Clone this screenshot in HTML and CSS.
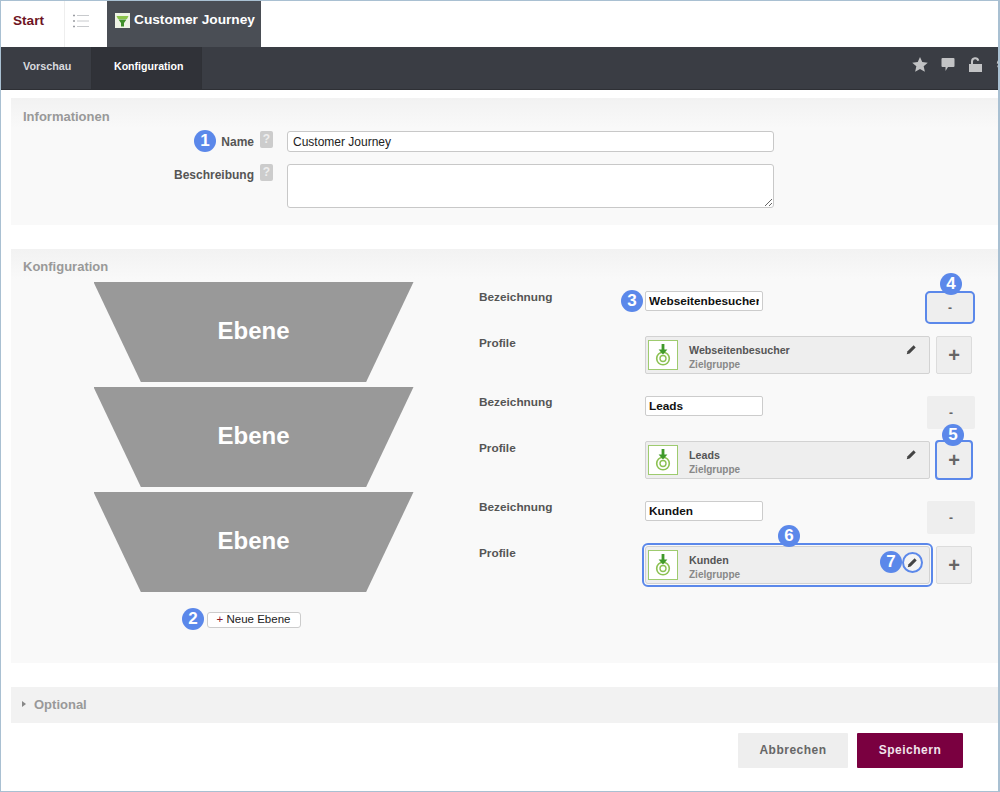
FILE: index.html
```html
<!DOCTYPE html>
<html lang="en">
<head>
    <meta charset="UTF-8">
    <title>Customer Journey</title>
    <link rel="stylesheet" href="styles.css">
</head>
<body>
    <div class="tabs">
        <div class="tab-start">Start</div>
        <div class="tab-list">
            <svg width="16" height="14" viewBox="0 0 16 14">
                <path d="M0 1.500h2M0 7h2M0 12.500h2" stroke="#9a9da2" stroke-width="1.500"/>
                <path d="M4 1.500h12M4 7h12M4 12.500h12" stroke="#c8cacd" stroke-width="1"/>
            </svg>
        </div>
        <div class="tab-active">
            <span class="tab-icon">
                <svg width="13" height="12" viewBox="0 0 13 12"><path d="M.5 1h12l-1.500 3H2z" fill="#8bc34a"/><path d="M2.500 4.500h8L8 8v3.500H5V8z" fill="#3f8f2a"/></svg>
            </span>
            Customer Journey
        </div>
    </div>

    <div class="nav">
        <div class="nav-item">Vorschau</div>
        <div class="nav-item nav-current">Konfiguration</div>
        <div class="nav-icons">
            <svg width="16" height="15" viewBox="0 0 17 16"><path d="M8.500 0l2.400 5.400 5.900.6-4.400 3.900 1.300 5.800-5.200-3-5.200 3 1.300-5.800L.2 6l5.900-.6z" fill="#c2c3c5"/></svg>
            <svg width="14" height="15" viewBox="0 0 14 15"><path d="M1.500 1h11a1 1 0 0 1 1 1v7a1 1 0 0 1-1 1H7l-2.500 4v-4h-3a1 1 0 0 1-1-1V2a1 1 0 0 1 1-1z" fill="#c2c3c5"/></svg>
            <svg width="15" height="15" viewBox="0 0 15 15"><path d="M1 7h13v8H1z" fill="#c2c3c5"/><path d="M4 7V4.500a3.200 3.200 0 0 1 6.300-.8" fill="none" stroke="#c2c3c5" stroke-width="2"/></svg>
            <svg width="14" height="14" viewBox="0 0 14 14"><circle cx="7" cy="7" r="4.500" fill="none" stroke="#c2c3c5" stroke-width="3.500" stroke-dasharray="3 1.700"/></svg>
        </div>
    </div>

    <div class="content">
        <section class="panel panel-info">
            <h2>Informationen</h2>
            <div class="info-row">
                <label class="info-label">Name</label>
                <span class="help">?</span>
                <input class="info-input" type="text" value="Customer Journey">
            </div>
            <div class="info-row info-row-area">
                <label class="info-label">Beschreibung</label>
                <span class="help">?</span>
                <textarea class="info-area"></textarea>
            </div>
        </section>

        <section class="panel panel-config">
            <h2>Konfiguration</h2>
            <div class="config-body">
                <div class="funnel">
                    <div class="funnel-step">Ebene</div>
                    <div class="funnel-step">Ebene</div>
                    <div class="funnel-step">Ebene</div>
                    <button class="add-level"><span class="add-plus">+</span> Neue Ebene</button>
                </div>
                <div class="levels">
                    <div class="level">
                        <div class="level-label">Bezeichnung</div>
                        <input class="level-input" type="text" value="Webseitenbesucher">
                        <button class="btn-minus marked">-</button>
                        <div class="level-label label-profile">Profile</div>
                        <div class="profile">
                            <span class="profile-icon"><svg width="16" height="22" viewBox="0 0 16 22"><circle cx="8" cy="14.500" r="6.300" fill="none" stroke="#8cc152" stroke-width="1.600"/><circle cx="8" cy="14.500" r="3" fill="none" stroke="#8cc152" stroke-width="1.400"/><path d="M6.600 0h2.800v5.500h3L8 10.500l-4.400-5h3z" fill="#3f9a2a"/></svg></span>
                            <div class="profile-text"><b>Webseitenbesucher</b><span>Zielgruppe</span></div>
                            <svg class="pencil" width="11" height="11" viewBox="0 0 12 12"><path d="M.8 11.200l.9-3.200 6.600-6.600 2.300 2.300-6.600 6.600z" fill="#444"/></svg>
                        </div>
                        <button class="btn-plus">+</button>
                    </div>
                    <div class="level">
                        <div class="level-label">Bezeichnung</div>
                        <input class="level-input" type="text" value="Leads">
                        <button class="btn-minus">-</button>
                        <div class="level-label label-profile">Profile</div>
                        <div class="profile">
                            <span class="profile-icon"><svg width="16" height="22" viewBox="0 0 16 22"><circle cx="8" cy="14.500" r="6.300" fill="none" stroke="#8cc152" stroke-width="1.600"/><circle cx="8" cy="14.500" r="3" fill="none" stroke="#8cc152" stroke-width="1.400"/><path d="M6.600 0h2.800v5.500h3L8 10.500l-4.400-5h3z" fill="#3f9a2a"/></svg></span>
                            <div class="profile-text"><b>Leads</b><span>Zielgruppe</span></div>
                            <svg class="pencil" width="11" height="11" viewBox="0 0 12 12"><path d="M.8 11.200l.9-3.200 6.600-6.600 2.300 2.300-6.600 6.600z" fill="#444"/></svg>
                        </div>
                        <button class="btn-plus marked">+</button>
                    </div>
                    <div class="level">
                        <div class="level-label">Bezeichnung</div>
                        <input class="level-input" type="text" value="Kunden">
                        <button class="btn-minus">-</button>
                        <div class="level-label label-profile">Profile</div>
                        <div class="profile marked">
                            <span class="profile-icon"><svg width="16" height="22" viewBox="0 0 16 22"><circle cx="8" cy="14.500" r="6.300" fill="none" stroke="#8cc152" stroke-width="1.600"/><circle cx="8" cy="14.500" r="3" fill="none" stroke="#8cc152" stroke-width="1.400"/><path d="M6.600 0h2.800v5.500h3L8 10.500l-4.400-5h3z" fill="#3f9a2a"/></svg></span>
                            <div class="profile-text"><b>Kunden</b><span>Zielgruppe</span></div>
                            <span class="pencil-ring"><svg width="11" height="11" viewBox="0 0 12 12"><path d="M.8 11.200l.9-3.200 6.600-6.600 2.300 2.300-6.600 6.600z" fill="#444"/></svg></span>
                        </div>
                        <button class="btn-plus">+</button>
                    </div>
                </div>
            </div>
        </section>

        <section class="panel panel-optional">
            <span class="caret"></span>Optional
        </section>

        <div class="actions">
            <button class="btn-cancel">Abbrechen</button>
            <button class="btn-save">Speichern</button>
        </div>
    </div>

    <span class="badge badge-1">1</span>
    <span class="badge badge-2">2</span>
    <span class="badge badge-3">3</span>
    <span class="badge badge-4">4</span>
    <span class="badge badge-5">5</span>
    <span class="badge badge-6">6</span>
    <span class="badge badge-7">7</span>
</body>
</html>
```

FILE: styles.css
```css
* {
    box-sizing: border-box;
}
html, body {
    height: 100%;
}
body {
    position: relative;
    margin: 0;
    height: 792px;
    overflow: hidden;
    border: 1px solid #a9c0d2;
    border-right-width: 2px;
    background-color: #fff;
    font-family: "Liberation Sans", Arial, sans-serif;
    color: #4a4a4a;
}

.tabs {
    display: flex;
    height: 46px;
    background-color: #fff;
}
.tab-start {
    width: 64px;
    padding: 12px 0 0 12px;
    border-right: 1px solid #eee;
    color: #6e1423;
    font-size: 13.600px;
    font-weight: bold;
}
.tab-list {
    width: 42px;
    padding: 13px 0 0 8px;
}
.tab-active {
    display: flex;
    align-items: flex-start;
    width: 154px;
    padding: 11px 0 0 8px;
    background-color: #4a4e55;
    color: #fff;
    font-size: 13.700px;
    font-weight: bold;
}
.tab-icon {
    display: flex;
    align-items: center;
    justify-content: center;
    width: 15px;
    height: 15px;
    margin: 1px 4px 0 0;
    background-color: #eef3e4;
}

.nav {
    display: flex;
    height: 43px;
    background-color: #3a3d44;
    border-bottom: 1px solid #2e3035;
}
.nav-item {
    width: 91px;
    padding-top: 13px;
    padding-left: 22px;
    border-right: 1px solid #2f3136;
    color: #d8dade;
    font-size: 10.800px;
    font-weight: bold;
}
.nav-current {
    width: 110px;
    background-color: #303238;
    color: #fff;
    font-size: 10.600px;
}
.nav-icons {
    display: flex;
    align-items: flex-start;
    gap: 13px;
    margin-left: auto;
    margin-right: -12px;
    padding-top: 10px;
}

.content {
    padding: 8px 0 0 10px;
}
.panel {
    background: linear-gradient(#f2f2f2, #f9f9f9 30px);
}
.panel h2 {
    margin: 0;
    color: #999;
    font-size: 13px;
    font-weight: bold;
}

.panel-info {
    height: 127px;
    padding: 11px 12px 0;
}
.info-row {
    display: flex;
    align-items: flex-start;
    margin-top: 7px;
}
.info-row-area {
    margin-top: 12px;
}
.info-label {
    width: 231px;
    padding-top: 4px;
    text-align: right;
    color: #555;
    font-size: 12px;
    font-weight: bold;
}
.help {
    width: 13px;
    height: 17px;
    margin: 0 14px 0 6px;
    background-color: #ccc;
    border-radius: 2px;
    color: #eee;
    font-size: 12px;
    font-weight: bold;
    line-height: 17px;
    text-align: center;
}
.info-input, .info-area {
    width: 487px;
    padding: 0 5px;
    background-color: #fff;
    border: 1px solid #c8c8c8;
    border-radius: 3px;
    font-family: "Liberation Sans", Arial, sans-serif;
    font-size: 12px;
    color: #222;
}
.info-input {
    height: 21px;
}
.info-area {
    display: block;
    height: 44px;
}

.panel-config {
    height: 414px;
    margin-top: 24px;
    padding: 10px 12px 0;
}
.config-body {
    display: flex;
    margin-top: 8px;
}
.funnel {
    display: flex;
    flex-direction: column;
    align-items: center;
    width: 456px;
    padding-left: 5px;
}
.funnel-step {
    display: flex;
    align-items: center;
    justify-content: center;
    flex: none;
    width: 320px;
    height: 100px;
    margin-bottom: 5px;
    padding-bottom: 2px;
    background-color: #999;
    clip-path: polygon(0 0, 100% 0, 85.200% 100%, 14.800% 100%);
    color: #fff;
    font-size: 24px;
    font-weight: bold;
}
.add-level {
    height: 16px;
    width: 94px;
    margin-top: 15px;
    padding: 0 0 2px;
    background-color: #fff;
    border: 1px solid #ccc;
    border-radius: 3px;
    color: #222;
    font-family: "Liberation Sans", Arial, sans-serif;
    font-size: 11.500px;
    line-height: 13px;
}
.add-plus {
    color: #8b1a2b;
}

.levels {
    display: flex;
    flex-direction: column;
}
.level {
    display: grid;
    grid-template-columns: 166px 285px 6px 36px;
    grid-template-rows: 45px 38px;
    row-gap: 0;
    height: 105px;
    margin-top: 9px;
    margin-bottom: -9px;
}
.level-label {
    margin-top: -1px;
    color: #555;
    font-size: 11.800px;
    font-weight: bold;
}
.label-profile {
    grid-row: 2;
    grid-column: 1;
    margin-top: 0;
}
.level-input {
    width: 118px;
    height: 20px;
    margin-top: 0;
    padding: 0 3px;
    background-color: #fff;
    border: 1px solid #ccc;
    border-radius: 2px;
    color: #111;
    font-family: "Liberation Sans", Arial, sans-serif;
    font-size: 11.800px;
    font-weight: bold;
}
.btn-minus {
    grid-column: 3 / span 2;
    justify-self: end;
    width: 48px;
    height: 33px;
    margin-top: 0;
    margin-right: -3px;
    background-color: #eee;
    border: none;
    border-radius: 2px;
    color: #666;
    font-size: 12px;
    font-weight: bold;
}
.profile {
    grid-row: 2;
    grid-column: 2;
    display: flex;
    align-items: center;
    height: 38px;
    padding: 2px 12px 2px 2px;
    background-color: #eee;
    border: 1px solid #d2d2d2;
    border-radius: 2px;
}
.profile-icon {
    display: flex;
    align-items: center;
    justify-content: center;
    flex: none;
    width: 30px;
    height: 30px;
    background-color: #fff;
    border: 1px solid #9ecb6f;
}
.profile-text {
    display: flex;
    flex-direction: column;
    gap: 3px;
    margin-left: 11px;
    padding-top: 3px;
    font-size: 10.700px;
}
.profile-text b {
    color: #555;
}
.profile-text span {
    color: #888;
    font-size: 10px;
    font-weight: bold;
}
.pencil {
    margin: -12px 0 0 auto;
}
.pencil-ring {
    display: flex;
    align-items: center;
    justify-content: center;
    width: 21px;
    height: 21px;
    margin: -5px -6px 0 auto;
    background-color: #f4f4f4;
    border: 2px solid #5b88ea;
    border-radius: 50%;
}
.btn-plus {
    grid-row: 2;
    grid-column: 4;
    height: 38px;
    padding: 0;
    background-color: #eee;
    border: 1px solid #dcdcdc;
    border-radius: 2px;
    color: #666;
    font-family: "Liberation Sans", Arial, sans-serif;
    font-size: 20px;
    font-weight: bold;
}
.marked {
    outline: 2px solid #5b88ea;
    outline-offset: 1px;
    border-radius: 3px;
}
.btn-plus.marked {
    outline-offset: -1px;
}
.btn-minus.marked {
    width: 50px;
    outline-offset: -2px;
    border-radius: 5px;
    margin-right: -3px;
}

.panel-optional {
    display: flex;
    align-items: center;
    height: 36px;
    margin-top: 24px;
    padding: 0 0 2px 11px;
    background: #f2f2f2;
    color: #999;
    font-size: 13px;
    font-weight: bold;
}
.caret {
    width: 0;
    height: 0;
    margin-right: 8px;
    border-left: 4px solid #888;
    border-top: 3.500px solid transparent;
    border-bottom: 3.500px solid transparent;
}

.actions {
    display: flex;
    justify-content: flex-end;
    gap: 9px;
    margin-top: 10px;
    padding-right: 35px;
}
.actions button {
    height: 35px;
    padding-bottom: 3px;
    border: none;
    border-radius: 1px;
    font-family: "Liberation Sans", Arial, sans-serif;
    font-size: 12px;
    font-weight: bold;
    letter-spacing: 0.500px;
}
.btn-cancel {
    width: 110px;
    background-color: #eee;
    color: #666;
}
.btn-save {
    width: 106px;
    background-color: #7a0040;
    color: #f2e4ec;
}

.badge {
    position: absolute;
    width: 22px;
    height: 22px;
    background-color: #5b88ea;
    border-radius: 50%;
    color: #fff;
    font-size: 17px;
    font-weight: bold;
    line-height: 22px;
    text-align: center;
}
.badge-1 { left: 193px; top: 129px; }
.badge-2 { left: 181px; top: 607px; }
.badge-3 { left: 620px; top: 289px; }
.badge-4 { left: 939px; top: 272px; }
.badge-5 { left: 941px; top: 423px; }
.badge-6 { left: 777px; top: 524px; }
.badge-7 { left: 879px; top: 550px; }
```
